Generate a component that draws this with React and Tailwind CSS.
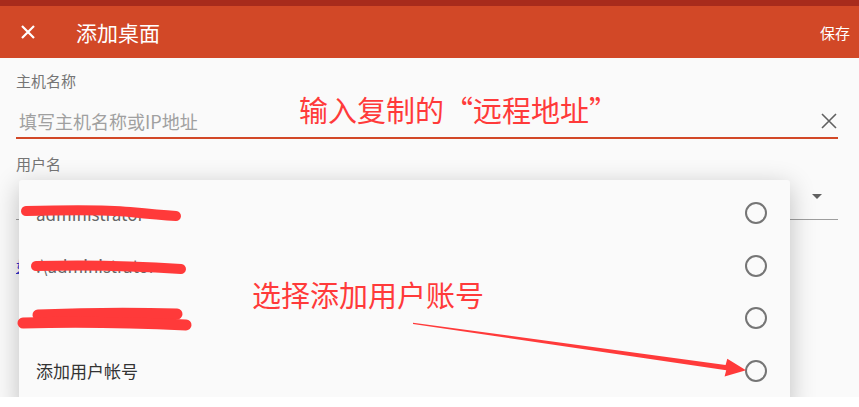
import React from "react";

const Circle = () => (
  <svg width="24" height="24" viewBox="0 0 24 24" className="shrink-0">
    <circle cx="12" cy="12" r="10" fill="none" stroke="#757575" strokeWidth="2" />
  </svg>
);

function Row({ children, muted }) {
  return (
    <div className="h-[52.5px] flex items-center pl-[17px] pr-[22px]">
      <div className={muted ? "flex-1 text-[17px] text-[#666]" : "flex-1 text-[17px] text-[#333]"}>{children}</div>
      <Circle />
    </div>
  );
}

export default function App() {
  return (
    <div className="w-[859px] h-[407px] flex flex-col bg-white font-['Noto_Sans_CJK_SC','Noto_Sans',sans-serif]">
      <div className="h-[397px] relative overflow-hidden bg-[#fafafa] flex flex-col">
        <div className="h-[6px] bg-[#a82b1c]" />
        <div className="h-[52px] bg-[#d24827] flex items-center pl-[21px] pr-[9px] text-white">
          <svg width="14" height="14" viewBox="0 0 14 14">
            <path d="M1 1L13 13M13 1L1 13" stroke="white" strokeWidth="2.2" />
          </svg>
          <div className="ml-[41px] text-[21px] leading-none">添加桌面</div>
          <div className="ml-auto text-[15px] leading-none">保存</div>
        </div>

        <div className="pl-4 pr-[21px] flex flex-col">
          <div className="mt-[13px] text-[15px] leading-[20px] text-[#757575]">主机名称</div>
          <div className="mt-[18px] flex items-center pl-[3px] pb-[4px] border-b-2 border-[#d24827]">
            <div className="flex-1 text-[18px] leading-[24px] text-[#a0a0a0]">填写主机名称或IP地址</div>
            <svg width="16" height="16" viewBox="0 0 16 16" className="mr-[1px]">
              <path d="M1 1L15 15M15 1L1 15" stroke="#616161" strokeWidth="1.6" />
            </svg>
          </div>
          <div className="mt-[15px] text-[15px] leading-[20px] text-[#757575]">用户名</div>
          <div className="h-[46px] flex items-center justify-end border-b border-[#9e9e9e] pr-[16px]">
            <svg width="10" height="5" viewBox="0 0 10 5">
              <path d="M0 0H10L5 5Z" fill="#616161" />
            </svg>
          </div>
          <div className="mt-[36px] text-[15px] leading-[20px] text-[#3333cc] underline">如</div>
        </div>

        <div className="absolute left-[19px] top-[180px] w-[771px] h-[230px] bg-[#fafafa] rounded-[3px] shadow-[0_6px_26px_rgba(0,0,0,0.24)] pt-[7px] flex flex-col">
          <Row muted>administrator</Row>
          <Row muted>.\administrator</Row>
          <Row muted>administrator</Row>
          <Row>添加用户帐号</Row>
        </div>

        <svg className="absolute left-0 top-0 pointer-events-none" width="859" height="397" viewBox="0 0 859 397">
          <g stroke="#ff3a3a" strokeLinecap="round" fill="none">
            <path d="M26 211 Q100 209 130 212 T176 216" strokeWidth="10" />
            <path d="M36 266 Q110 264 181 269" strokeWidth="10" />
            <path d="M38 315 Q110 312 177 314" strokeWidth="11" />
            <path d="M23 323 Q100 321 186 325" strokeWidth="11" />
          </g>
          <polygon
            points="413,322.8 725.6,364.9 727.3,358.7 746,370.3 724.6,376.5 726.2,370.3 413,324"
            fill="#ff3a3a"
          />
        </svg>

        <div className="absolute left-[299px] top-[89px] text-[29px] leading-[40px] text-[#ff3a3a] whitespace-nowrap">
          输入复制的“远程地址”
        </div>
        <div className="absolute left-[252px] top-[274px] text-[29px] leading-[40px] text-[#ff3a3a] whitespace-nowrap">
          选择添加用户账号
        </div>
      </div>
      <div className="h-[10px] bg-white" />
    </div>
  );
}
